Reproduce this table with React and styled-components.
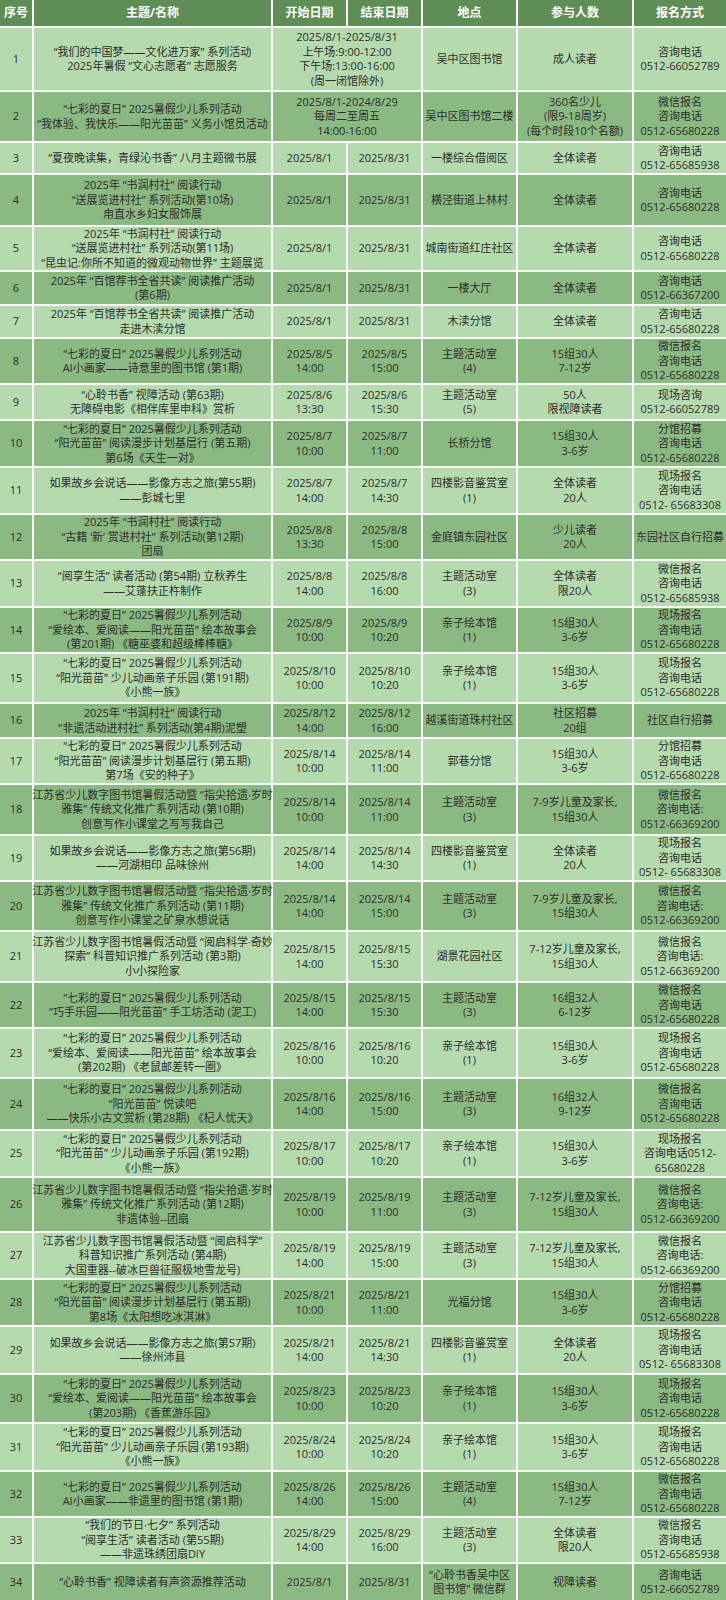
import React from 'react';
import styled, { createGlobalStyle } from 'styled-components';

const GlobalStyle = createGlobalStyle`
  html, body {
    margin: 0;
    padding: 0;
    background: #ffffff;
  }
  body {
    font-family: "Open Sans", "Noto Sans CJK SC", sans-serif;
  }
`;

const tones = {
  head: '#5e8e55',
  light: '#b4daae',
  dark: '#8ab982',
};

const Table = styled.div`
  display: grid;
  width: 726px;
  grid-template-columns: 32px 237px 73px 73px 93px 114px 1fr;
  grid-template-rows: ${props => props.$rows};
  gap: 2px;
  background: #ffffff;
`;

const Cell = styled.div`
  grid-column: span ${props => props.$span || 1};
  background: ${props => tones[props.$tone]};
  display: flex;
  flex-direction: column;
  align-items: center;
  justify-content: center;
  text-align: center;
  font-size: 11px;
  line-height: 14.5px;
  color: #2d2d2d;
  white-space: nowrap;
  min-width: 0;
`;

const HeadCell = styled(Cell)`
  color: #ffffff;
  font-weight: 700;
  font-size: 12px;
`;

const Line = styled.span`
  display: block;
`;

const headers = ['序号', '主题/名称', '开始日期', '结束日期', '地点', '参与人数', '报名方式'];

const T3 = '“七彩的夏日” 2025暑假少儿系列活动';
const JS = '江苏省少儿数字图书馆暑假活动暨 “指尖拾遗·岁时';

const rows = [
  { h: 62, title: ['“我们的中国梦——文化进万家” 系列活动', '2025年暑假 “文心志愿者” 志愿服务'], dates: ['2025/8/1-2025/8/31', '上午场:9:00-12:00', '下午场:13:00-16:00', '(周一闭馆除外)'], place: '吴中区图书馆', people: '成人读者', sign: ['咨询电话', '0512-66052789'] },
  { h: 49, title: [T3, '“我体验、我快乐——阳光苗苗” 义务小馆员活动'], dates: ['2025/8/1-2024/8/29', '每周二至周五', '14:00-16:00'], place: '吴中区图书馆二楼', people: ['360名少儿', '(限9-18周岁)', '(每个时段10个名额)'], sign: ['微信报名', '咨询电话', '0512-65680228'] },
  { h: 30, title: '“夏夜晚读集，青绿沁书香” 八月主题微书展', start: '2025/8/1', end: '2025/8/31', place: '一楼综合借阅区', people: '全体读者', sign: ['咨询电话', '0512-65685938'] },
  { h: 50, title: ['2025年 “书润村社” 阅读行动', '“送展览进村社” 系列活动(第10场)', '甪直水乡妇女服饰展'], start: '2025/8/1', end: '2025/8/31', place: '横泾街道上林村', people: '全体读者', sign: ['咨询电话', '0512-65680228'] },
  { h: 43, title: ['2025年 “书润村社” 阅读行动', '“送展览进村社” 系列活动(第11场)', '“昆虫记:你所不知道的微观动物世界” 主题展览'], start: '2025/8/1', end: '2025/8/31', place: '城南街道红庄社区', people: '全体读者', sign: ['咨询电话', '0512-65680228'] },
  { h: 32, title: ['2025年 “百馆荐书全省共读” 阅读推广活动', '(第6期)'], start: '2025/8/1', end: '2025/8/31', place: '一楼大厅', people: '全体读者', sign: ['咨询电话', '0512-66367200'] },
  { h: 31, title: ['2025年 “百馆荐书全省共读” 阅读推广活动', '走进木渎分馆'], start: '2025/8/1', end: '2025/8/31', place: '木渎分馆', people: '全体读者', sign: ['咨询电话', '0512-65680228'] },
  { h: 44, title: [T3, 'AI小画家——诗意里的图书馆 (第1期)'], start: ['2025/8/5', '14:00'], end: ['2025/8/5', '15:00'], place: ['主题活动室', '(4)'], people: ['15组30人', '7-12岁'], sign: ['微信报名', '咨询电话', '0512-65680228'] },
  { h: 34, title: ['“心聆书香” 视障活动 (第63期)', '无障碍电影《相伴库里申科》赏析'], start: ['2025/8/6', '13:30'], end: ['2025/8/6', '15:30'], place: ['主题活动室', '(5)'], people: ['50人', '限视障读者'], sign: ['现场咨询', '0512-66052789'] },
  { h: 45, title: [T3, '“阳光苗苗” 阅读漫步计划基层行 (第五期)', '第6场《天生一对》'], start: ['2025/8/7', '10:00'], end: ['2025/8/7', '11:00'], place: '长桥分馆', people: ['15组30人', '3-6岁'], sign: ['分馆招募', '咨询电话', '0512-65680228'] },
  { h: 45, title: ['如果故乡会说话——影像方志之旅(第55期)', '——彭城七里'], start: ['2025/8/7', '14:00'], end: ['2025/8/7', '14:30'], place: ['四楼影音鉴赏室', '(1)'], people: ['全体读者', '20人'], sign: ['现场报名', '咨询电话', '0512- 65683308'] },
  { h: 44, title: ['2025年 “书润村社” 阅读行动', '“古籍 ‘新’ 赏进村社” 系列活动(第12期)', '团扇'], start: ['2025/8/8', '13:30'], end: ['2025/8/8', '15:00'], place: '金庭镇东园社区', people: ['少儿读者', '20人'], sign: '东园社区自行招募' },
  { h: 45, title: ['“阅享生活” 读者活动 (第54期) 立秋养生', '——艾蓬扶正杵制作'], start: ['2025/8/8', '14:00'], end: ['2025/8/8', '16:00'], place: ['主题活动室', '(3)'], people: ['全体读者', '限20人'], sign: ['微信报名', '咨询电话', '0512-65685938'] },
  { h: 44, title: [T3, '“爱绘本、爱阅读——阳光苗苗” 绘本故事会', '(第201期) 《糖巫婆和超级棒棒糖》'], start: ['2025/8/9', '10:00'], end: ['2025/8/9', '10:20'], place: ['亲子绘本馆', '(1)'], people: ['15组30人', '3-6岁'], sign: ['现场报名', '咨询电话', '0512-65680228'] },
  { h: 48, title: [T3, '“阳光苗苗” 少儿动画亲子乐园 (第191期)', '《小熊一族》'], start: ['2025/8/10', '10:00'], end: ['2025/8/10', '10:20'], place: ['亲子绘本馆', '(1)'], people: ['15组30人', '3-6岁'], sign: ['现场报名', '咨询电话', '0512-65680228'] },
  { h: 33, title: ['2025年 “书润村社” 阅读行动', '“非遗活动进村社” 系列活动(第4期)泥塑'], start: ['2025/8/12', '14:00'], end: ['2025/8/12', '16:00'], place: '越溪街道珠村社区', people: ['社区招募', '20组'], sign: '社区自行招募' },
  { h: 44, title: [T3, '“阳光苗苗” 阅读漫步计划基层行 (第五期)', '第7场《安的种子》'], start: ['2025/8/14', '10:00'], end: ['2025/8/14', '11:00'], place: '郭巷分馆', people: ['15组30人', '3-6岁'], sign: ['分馆招募', '咨询电话', '0512-65680228'] },
  { h: 49, title: [JS, '雅集” 传统文化推广系列活动 (第10期)', '创意写作小课堂之写写我自己'], start: ['2025/8/14', '10:00'], end: ['2025/8/14', '11:00'], place: ['主题活动室', '(3)'], people: ['7-9岁儿童及家长,', '15组30人'], sign: ['微信报名', '咨询电话:', '0512-66369200'] },
  { h: 44, title: ['如果故乡会说话——影像方志之旅(第56期)', '——河湖相印 品味徐州'], start: ['2025/8/14', '14:00'], end: ['2025/8/14', '14:30'], place: ['四楼影音鉴赏室', '(1)'], people: ['全体读者', '20人'], sign: ['现场报名', '咨询电话', '0512- 65683308'] },
  { h: 48, title: [JS, '雅集” 传统文化推广系列活动 (第11期)', '创意写作小课堂之矿泉水想说话'], start: ['2025/8/14', '14:00'], end: ['2025/8/14', '15:00'], place: ['主题活动室', '(3)'], people: ['7-9岁儿童及家长,', '15组30人'], sign: ['微信报名', '咨询电话:', '0512-66369200'] },
  { h: 49, title: ['江苏省少儿数字图书馆暑假活动暨 “阅启科学·奇妙', '探索” 科普知识推广系列活动 (第3期)', '小小探险家'], start: ['2025/8/15', '14:00'], end: ['2025/8/15', '15:30'], place: '湖景花园社区', people: ['7-12岁儿童及家长,', '15组30人'], sign: ['微信报名', '咨询电话:', '0512-66369200'] },
  { h: 44, title: [T3, '“巧手乐园——阳光苗苗” 手工坊活动 (泥工)'], start: ['2025/8/15', '14:00'], end: ['2025/8/15', '15:30'], place: ['主题活动室', '(3)'], people: ['16组32人', '6-12岁'], sign: ['微信报名', '咨询电话', '0512-65680228'] },
  { h: 48, title: [T3, '“爱绘本、爱阅读——阳光苗苗” 绘本故事会', '(第202期) 《老鼠邮差转一圈》'], start: ['2025/8/16', '10:00'], end: ['2025/8/16', '10:20'], place: ['亲子绘本馆', '(1)'], people: ['15组30人', '3-6岁'], sign: ['现场报名', '咨询电话', '0512-65680228'] },
  { h: 50, title: [T3, '“阳光苗苗” 悦读吧', '——快乐小古文赏析 (第28期) 《杞人忧天》'], start: ['2025/8/16', '14:00'], end: ['2025/8/16', '15:00'], place: ['主题活动室', '(3)'], people: ['16组32人', '9-12岁'], sign: ['微信报名', '咨询电话', '0512-65680228'] },
  { h: 45, title: [T3, '“阳光苗苗” 少儿动画亲子乐园 (第192期)', '《小熊一族》'], start: ['2025/8/17', '10:00'], end: ['2025/8/17', '10:20'], place: ['亲子绘本馆', '(1)'], people: ['15组30人', '3-6岁'], sign: ['现场报名', '咨询电话0512-', '65680228'] },
  { h: 53, title: [JS, '雅集” 传统文化推广系列活动 (第12期)', '非遗体验--团扇'], start: ['2025/8/19', '10:00'], end: ['2025/8/19', '11:00'], place: ['主题活动室', '(3)'], people: ['7-12岁儿童及家长,', '15组30人'], sign: ['微信报名', '咨询电话:', '0512-66369200'] },
  { h: 45, title: ['江苏省少儿数字图书馆暑假活动暨 “阅启科学”', '科普知识推广系列活动 (第4期)', '大国重器--破冰巨兽征服极地雪龙号)'], start: ['2025/8/19', '14:00'], end: ['2025/8/19', '15:00'], place: ['主题活动室', '(3)'], people: ['7-12岁儿童及家长,', '15组30人'], sign: ['微信报名', '咨询电话:', '0512-66369200'] },
  { h: 45, title: [T3, '“阳光苗苗” 阅读漫步计划基层行 (第五期)', '第8场《太阳想吃冰淇淋》'], start: ['2025/8/21', '10:00'], end: ['2025/8/21', '11:00'], place: '光福分馆', people: ['15组30人', '3-6岁'], sign: ['分馆招募', '咨询电话', '0512-65680228'] },
  { h: 46, title: ['如果故乡会说话——影像方志之旅(第57期)', '——徐州沛县'], start: ['2025/8/21', '14:00'], end: ['2025/8/21', '14:30'], place: ['四楼影音鉴赏室', '(1)'], people: ['全体读者', '20人'], sign: ['现场报名', '咨询电话', '0512- 65683308'] },
  { h: 47, title: [T3, '“爱绘本、爱阅读——阳光苗苗” 绘本故事会', '(第203期) 《香蕉游乐园》'], start: ['2025/8/23', '10:00'], end: ['2025/8/23', '10:20'], place: ['亲子绘本馆', '(1)'], people: ['15组30人', '3-6岁'], sign: ['现场报名', '咨询电话', '0512-65680228'] },
  { h: 46, title: [T3, '“阳光苗苗” 少儿动画亲子乐园 (第193期)', '《小熊一族》'], start: ['2025/8/24', '10:00'], end: ['2025/8/24', '10:20'], place: ['亲子绘本馆', '(1)'], people: ['15组30人', '3-6岁'], sign: ['现场报名', '咨询电话', '0512-65680228'] },
  { h: 44, title: [T3, 'AI小画家——非遗里的图书馆 (第1期)'], start: ['2025/8/26', '14:00'], end: ['2025/8/26', '15:00'], place: ['主题活动室', '(4)'], people: ['15组30人', '7-12岁'], sign: ['微信报名', '咨询电话', '0512-65680228'] },
  { h: 44, title: ['“我们的节日·七夕” 系列活动', '“阅享生活” 读者活动 (第55期)', '——非遗珠绣团扇DIY'], start: ['2025/8/29', '14:00'], end: ['2025/8/29', '16:00'], place: ['主题活动室', '(3)'], people: ['全体读者', '限20人'], sign: ['微信报名', '咨询电话', '0512-65685938'] },
  { h: 36, title: '“心聆书香” 视障读者有声资源推荐活动', start: '2025/8/1', end: '2025/8/31', place: ['“心聆书香吴中区', '图书馆” 微信群'], people: '视障读者', sign: ['咨询电话', '0512-66052789'] },
];

const Lines = ({ value }) =>
  (Array.isArray(value) ? value : [value]).map((text, i) => <Line key={i}>{text}</Line>);

const App = () => {
  const template = ['26px', ...rows.map(r => `${r.h}px`)].join(' ');
  return (
    <div lang="zh-CN">
      <GlobalStyle />
      <Table $rows={template}>
        {headers.map(h => (
          <HeadCell key={h} $tone="head">{h}</HeadCell>
        ))}
        {rows.map((row, index) => {
          const tone = index % 2 === 0 ? 'light' : 'dark';
          return (
            <React.Fragment key={`row_${index}`}>
              <Cell $tone={tone}>{index + 1}</Cell>
              <Cell $tone={tone}><Lines value={row.title} /></Cell>
              {row.dates ? (
                <Cell $tone={tone} $span={2}><Lines value={row.dates} /></Cell>
              ) : (
                <>
                  <Cell $tone={tone}><Lines value={row.start} /></Cell>
                  <Cell $tone={tone}><Lines value={row.end} /></Cell>
                </>
              )}
              <Cell $tone={tone}><Lines value={row.place} /></Cell>
              <Cell $tone={tone}><Lines value={row.people} /></Cell>
              <Cell $tone={tone}><Lines value={row.sign} /></Cell>
            </React.Fragment>
          );
        })}
      </Table>
    </div>
  );
};

export default App;
